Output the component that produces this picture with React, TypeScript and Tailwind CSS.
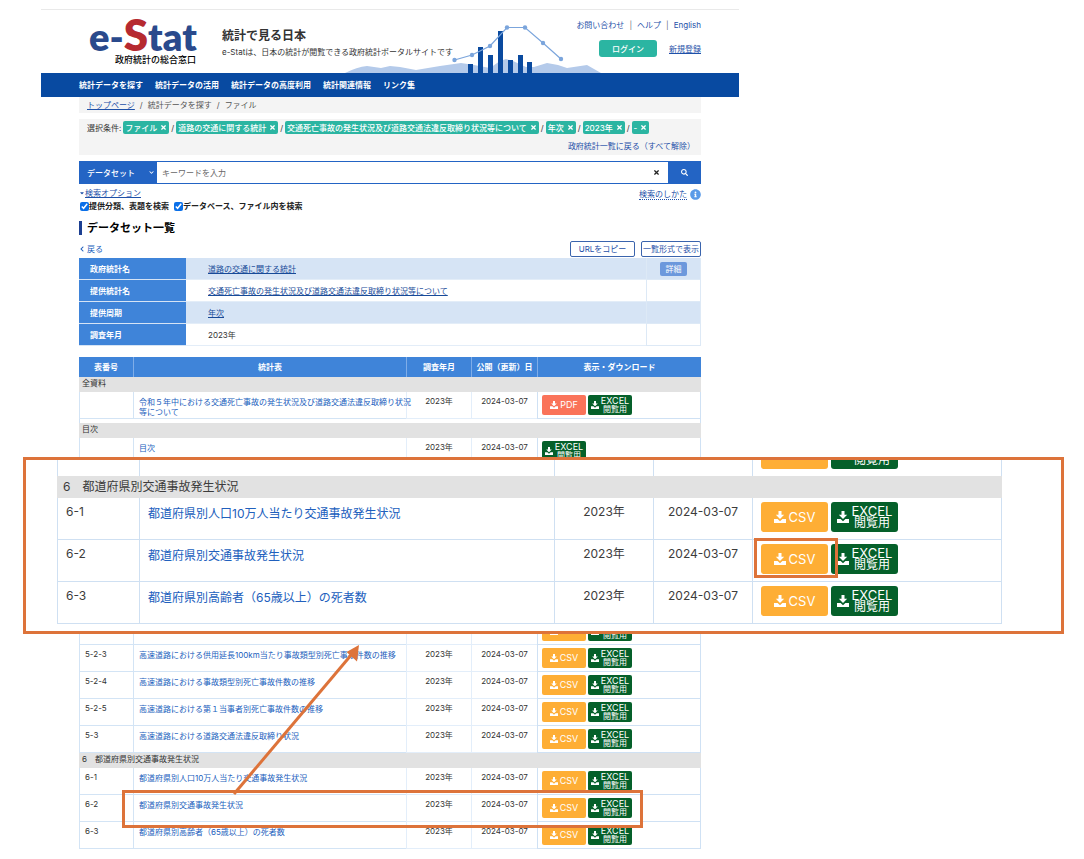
import { Fragment } from "react";
import { FaChevronDown, FaChevronLeft, FaInfoCircle, FaSearch, FaTimes, FaCaretDown } from "react-icons/fa";

type Row = { no: string; title: string[]; kind: "PDF" | "CSV" | "NONE" };

const conditions = [
  "ファイル",
  "道路の交通に関する統計",
  "交通死亡事故の発生状況及び道路交通法違反取締り状況等について",
  "年次",
  "2023年",
  "-",
];

const navItems = ["統計データを探す", "統計データの活用", "統計データの高度利用", "統計関連情報", "リンク集"];

const details = [
  { label: "政府統計名", value: "道路の交通に関する統計", link: true, button: true },
  { label: "提供統計名", value: "交通死亡事故の発生状況及び道路交通法違反取締り状況等について", link: true },
  { label: "提供周期", value: "年次", link: true },
  { label: "調査年月", value: "2023年", link: false },
];

const lowerRows: Row[] = [
  { no: "5-2-3", title: ["高速道路における供用延長100km当たり事故類型別死亡事故件数の推移"], kind: "CSV" },
  { no: "5-2-4", title: ["高速道路における事故類型別死亡事故件数の推移"], kind: "CSV" },
  { no: "5-2-5", title: ["高速道路における第１当事者別死亡事故件数の推移"], kind: "CSV" },
  { no: "5-3", title: ["高速道路における道路交通法違反取締り状況"], kind: "CSV" },
];

const prefectureRows: Row[] = [
  { no: "6-1", title: ["都道府県別人口10万人当たり交通事故発生状況"], kind: "CSV" },
  { no: "6-2", title: ["都道府県別交通事故発生状況"], kind: "CSV" },
  { no: "6-3", title: ["都道府県別高齢者（65歳以上）の死者数"], kind: "CSV" },
];

function HeaderChart() {
  const bars = [
    [468, 63],
    [478, 46],
    [488, 54],
    [498, 30],
    [508, 59],
    [518, 54],
    [527, 61],
  ];
  const dots = [
    [454.5, 59],
    [472, 54],
    [490, 45],
    [507, 26.5],
    [525, 26.5],
    [543, 42],
    [561, 58],
  ];
  return (
    <svg viewBox="345 22 258 50" className="absolute bottom-0 left-[304px] h-[50px] w-[258px]" aria-hidden="true">
      <path
        d="M345 72 Q357 66 367 65 L381 67 L390 65 L400 66 L416 69 L440 65 L461 62 L474 64 L490 67 L500 60 L506 58 L513 60 L526 66 L534 66 L547 62 L558 64 L567 67 L587 64 L601 72 Z"
        fill="#b4caea"
      />
      {bars.map(([x, y]) => (
        <rect key={x} x={x} y={y} width="5" height={72 - y} fill="#0a4a9f" />
      ))}
      <polyline points={dots.map((d) => d.join(",")).join(" ")} fill="none" stroke="#7ba5dc" strokeWidth="1.2" />
      {dots.map(([x, y]) => (
        <circle key={x} cx={x} cy={y} r="2.2" fill="#7ba5dc" />
      ))}
    </svg>
  );
}

function DownloadIcon({ className }: { className: string }) {
  return (
    <svg viewBox="0 0 12 12" className={className} fill="currentColor" aria-hidden="true">
      <path d="M4.5 0h3v3.800h2.700L6 8 1.800 3.800h2.700z" />
      <path d="M0 8h3.600L6 10.200 8.400 8H12v4H0z" />
    </svg>
  );
}

function DownloadButton({ kind, large = false }: { kind: "PDF" | "CSV" | "EXCEL"; large?: boolean }) {
  const color = kind === "PDF" ? "bg-[#fa7359]" : kind === "CSV" ? "bg-[#feae35]" : "bg-[#05602a]";
  return (
    <button
      type="button"
      className={`flex shrink-0 items-center justify-center text-white ${color} ${
        large ? "h-[30px] w-[67px] gap-[3px] rounded-[3px] text-[13px] leading-[12px]" : "h-[20px] w-[44px] gap-[2px] rounded-[2px] text-[9px] leading-[8px]"
      }`}
    >
      <DownloadIcon className={large ? "size-[12px] shrink-0" : "size-[8px] shrink-0"} />
      {kind === "EXCEL" ? (
        <span className="flex flex-col items-center">
          <span>EXCEL</span>
          <span className={large ? "text-[12px]" : "text-[8px]"}>閲覧用</span>
        </span>
      ) : (
        <span>{kind}</span>
      )}
    </button>
  );
}

function DataRow({ row }: { row: Row }) {
  return (
    <tr className="h-[27px]">
      <td className="border-b border-l border-[#d3e4f5] pt-[3px] pl-[5px]">{row.no}</td>
      <td className="border-b border-l border-[#d3e4f5] pt-[5px] pl-[5px] leading-[10px] whitespace-nowrap">
        <a href="#" className="text-[#2160bd]">
          {row.title.map((line) => (
            <span key={line} className="block">
              {line}
            </span>
          ))}
        </a>
      </td>
      <td className="border-b border-l border-[#e3eefa] pt-[3px] text-center">2023年</td>
      <td className="border-b border-l border-[#e3eefa] pt-[3px] text-center">2024-03-07</td>
      <td className="border-x border-b border-[#cfe1f4] pt-[3px] pl-[4px]">
        <div className="flex gap-[2px]">
          {row.kind !== "NONE" && <DownloadButton kind={row.kind} />}
          <DownloadButton kind="EXCEL" />
        </div>
      </td>
    </tr>
  );
}

function SectionRow({ children }: { children: string }) {
  return (
    <tr className="h-[15px]">
      <th colSpan={5} scope="colgroup" className="bg-[#e2e2e2] pl-[3px] text-left font-normal whitespace-pre">
        {children}
      </th>
    </tr>
  );
}

function Callout() {
  return (
    <aside className="absolute top-[457px] right-[20px] left-[23px] h-[177px] overflow-hidden border-[3px] border-[#dd733a] bg-white pr-[59px] pl-[31px]">
      <table className="w-full table-fixed border-separate border-spacing-0 text-[12px] leading-[18px] text-[#3c3c3c]">
        <colgroup>
          <col className="w-[82px]" />
          <col />
          <col className="w-[99px]" />
          <col className="w-[99px]" />
          <col className="w-[250px]" />
        </colgroup>
        <tbody>
          <tr className="h-[16px]">
            <td className="border-l border-[#cfe0f2]" />
            <td className="border-l border-[#cfe0f2]" />
            <td className="border-l border-[#cfe0f2]" />
            <td className="border-l border-[#cfe0f2]" />
            <td className="border-x border-[#cfe0f2] pl-[8px] align-top">
              <div className="flex h-[9px] items-end gap-[3px] overflow-hidden">
                <DownloadButton kind="CSV" large />
                <DownloadButton kind="EXCEL" large />
              </div>
            </td>
          </tr>
          <tr className="h-[22px]">
            <th colSpan={5} scope="colgroup" className="bg-[#e2e2e2] pl-[6px] text-left font-normal whitespace-pre">
              6　都道府県別交通事故発生状況
            </th>
          </tr>
          {prefectureRows.map((row) => (
            <tr key={row.no} className="h-[42px] align-top">
              <td className="border-b border-l border-[#cfe0f2] pt-[5px] pl-[8px]">{row.no}</td>
              <td className="border-b border-l border-[#cfe0f2] pt-[7px] pl-[8px]">
                <a href="#" className="text-[#2160bd]">
                  {row.title[0]}
                </a>
              </td>
              <td className="border-b border-l border-[#cfe0f2] pt-[5px] text-center">2023年</td>
              <td className="border-b border-l border-[#cfe0f2] pt-[5px] text-center">2024-03-07</td>
              <td className="border-x border-b border-[#cfe0f2] pt-[4px] pl-[8px]">
                <div className="relative flex gap-[3px]">
                  <DownloadButton kind="CSV" large />
                  <DownloadButton kind="EXCEL" large />
                  {row.no === "6-2" && (
                    <span className="absolute -top-[6px] -left-[7px] h-[40px] w-[84px] border-[3px] border-[#dd733a]" />
                  )}
                </div>
              </td>
            </tr>
          ))}
        </tbody>
      </table>
    </aside>
  );
}

export default function App() {
  return (
    <div
      lang="ja"
      className="relative min-h-screen overflow-hidden bg-white pt-[9px] pb-2 font-['Inter','Noto_Sans_CJK_JP',sans-serif] text-[8px] leading-[12px] text-[#333]"
    >
      <div className="ml-[41px] max-w-[698px]">
        <header className="relative flex h-[64px] border-t border-[#e9e9e9] pr-[38px] pl-[48px]">
          <HeaderChart />
          <a href="#" className="w-[107px] pt-[2px]">
            <span className="flex h-[43px] items-baseline justify-between font-['Lato',sans-serif] text-[38px] leading-[44px] font-extrabold text-[#2a4a8c]">
              <span>e</span>
              <span>-</span>
              <span className="text-[44px] text-[#b62a30]">S</span>
              <span>t</span>
              <span>a</span>
              <span>t</span>
            </span>
            <span className="block text-right text-[9px] leading-[10px] font-medium text-black">政府統計の総合窓口</span>
          </a>
          <div className="pt-[18px] pl-[26px]">
            <p className="text-[12px] leading-[16px] font-bold">統計で見る日本</p>
            <p className="leading-[16px] whitespace-nowrap">e-Statは、日本の統計が閲覧できる政府統計ポータルサイトです</p>
          </div>
          <div className="ml-auto flex flex-col items-end gap-[9px] pt-[9px] whitespace-nowrap text-[#1e50a8]">
            <div className="flex gap-[5px]">
              <a href="#">お問い合わせ</a>
              <span className="text-gray-500">|</span>
              <a href="#">ヘルプ</a>
              <span className="text-gray-500">|</span>
              <a href="#">English</a>
            </div>
            <div className="flex items-center gap-[12px]">
              <button type="button" className="h-[17px] w-[58px] rounded-[3px] bg-[#2bb5a2] font-medium text-white">
                ログイン
              </button>
              <a href="#" className="underline">
                新規登録
              </a>
            </div>
          </div>
        </header>

        <nav className="flex h-[24px] items-center gap-3 bg-[#084aa1] pl-[38px] font-bold text-white">
          {navItems.map((item) => (
            <a key={item} href="#">
              {item}
            </a>
          ))}
        </nav>

        <main className="mx-[38px]">
          <div className="flex h-[16px] items-center gap-[5px] bg-[#f4f4f4] pl-[8px] text-[#555]">
            <a href="#" className="text-[#1e50a8] underline">
              トップページ
            </a>
            <span>/</span>
            <span>統計データを探す</span>
            <span>/</span>
            <span>ファイル</span>
          </div>

          <section className="mt-[6px] h-[36px] bg-[#f4f4f4] pt-[2px] pr-[6px] pl-[8px]">
            <div className="flex items-center gap-[2px] whitespace-nowrap">
              <span>選択条件:</span>
              {conditions.map((name, i) => (
                <Fragment key={name}>
                  {i > 0 && <span>/</span>}
                  <button
                    type="button"
                    className="flex h-[13px] items-center gap-[3px] rounded-[2px] bg-[#2bb5a2] px-[2px] font-medium text-white"
                  >
                    {name}
                    <FaTimes className="size-[7px]" />
                  </button>
                </Fragment>
              ))}
            </div>
            <p className="mt-[6px] text-right">
              <a href="#" className="text-[#1e50a8]">
                政府統計一覧に戻る（すべて解除）
              </a>
            </p>
          </section>

          <form className="mt-[6px] flex h-[23px] border-y border-[#2364c4]">
            <div className="relative w-[78px] bg-[#2364c4]">
              <select
                aria-label="検索対象"
                className="h-full w-full appearance-none bg-transparent pl-[8px] font-medium text-white outline-none"
              >
                <option>データセット</option>
              </select>
              <FaChevronDown className="pointer-events-none absolute top-[8px] right-[3px] size-[5px] text-white" />
            </div>
            <input
              type="text"
              aria-label="キーワード"
              placeholder="キーワードを入力"
              className="min-w-0 flex-1 px-[5px] outline-none placeholder:text-[#666]"
            />
            <button type="button" aria-label="クリア" className="px-[8px]">
              <FaTimes className="size-[7px] text-[#222]" />
            </button>
            <button type="submit" aria-label="検索" className="flex w-[33px] items-center justify-center bg-[#2364c4] text-white">
              <FaSearch className="size-[7px]" />
            </button>
          </form>

          <div className="mt-[2px] flex items-center justify-between text-[#1e50a8]">
            <a href="#" className="flex items-center underline">
              <FaCaretDown className="size-[6px]" />
              検索オプション
            </a>
            <a href="#" className="flex items-center gap-[3px] pt-[3px]">
              <span className="border-b border-dotted border-[#1e50a8] leading-[10px]">検索のしかた</span>
              <FaInfoCircle className="size-[11px] text-[#5b9be8]" />
            </a>
          </div>
          <div className="flex h-[12px] items-center gap-[5px] font-bold text-[#222]">
            <label className="flex items-center">
              <input type="checkbox" defaultChecked className="ml-[1px] size-[9px] accent-[#0a6fe8]" />
              提供分類、表題を検索
            </label>
            <label className="flex items-center">
              <input type="checkbox" defaultChecked className="size-[9px] accent-[#0a6fe8]" />
              データベース、ファイル内を検索
            </label>
          </div>

          <h1 className="mt-[9px] border-l-3 border-[#1c3f91] pl-[5px] text-[11px] leading-[14px] font-bold text-black">
            データセット一覧
          </h1>

          <div className="mt-[5px] flex h-[18px] items-center">
            <a href="#" className="flex items-center gap-[2px] text-[#2160bd]">
              <FaChevronLeft className="size-[6px]" />
              戻る
            </a>
            <button type="button" className="ml-auto h-[16px] w-[65px] rounded-[2px] border border-[#3a64ad] text-[#1e50a8]">
              URLをコピー
            </button>
            <button
              type="button"
              className="ml-[6px] h-[16px] w-[60px] rounded-[2px] border border-[#3a64ad] whitespace-nowrap text-[#1e50a8]"
            >
              一覧形式で表示
            </button>
          </div>

          <table className="w-full table-fixed border-separate border-spacing-0">
            <colgroup>
              <col className="w-[107px]" />
              <col />
              <col className="w-[55px]" />
            </colgroup>
            <tbody>
              {details.map((d) => (
                <tr key={d.label} className="h-[22px] odd:bg-[#d6e4f5]">
                  <th scope="row" className="border-b border-[#d6e4f5] bg-[#3f84d9] pl-[11px] text-left font-bold text-white">
                    {d.label}
                  </th>
                  <td className="border-b border-[#e3edf8] pl-[22px]">
                    {d.link ? (
                      <a href="#" className="text-[#174a98] underline">
                        {d.value}
                      </a>
                    ) : (
                      d.value
                    )}
                  </td>
                  <td className="border-x border-b border-[#dde9f6] text-center">
                    {d.button && (
                      <button type="button" className="mx-auto block h-[14px] w-[27px] rounded-[2px] bg-[#6c98dc] text-white">
                        詳細
                      </button>
                    )}
                  </td>
                </tr>
              ))}
            </tbody>
          </table>

          <table className="mt-[11px] w-full table-fixed border-separate border-spacing-0">
            <colgroup>
              <col className="w-[54px]" />
              <col />
              <col className="w-[65px]" />
              <col className="w-[66px]" />
              <col className="w-[164px]" />
            </colgroup>
            <thead>
              <tr className="h-[20px] bg-[#3f84d9] whitespace-nowrap text-white">
                <th scope="col">表番号</th>
                <th scope="col" className="border-l border-[#7fade8]">統計表</th>
                <th scope="col" className="border-l border-[#7fade8]">調査年月</th>
                <th scope="col" className="border-l border-[#7fade8]">公開（更新）日</th>
                <th scope="col" className="border-l border-[#7fade8]">表示・ダウンロード</th>
              </tr>
            </thead>
            <tbody className="align-top">
              <SectionRow>全資料</SectionRow>
              <DataRow
                row={{
                  no: "",
                  title: ["令和５年中における交通死亡事故の発生状況及び道路交通法違反取締り状況", "等について"],
                  kind: "PDF",
                }}
              />
              <tr className="h-[4px]">
                <td colSpan={5} className="border-x border-[#cfe1f4]" />
              </tr>
              <SectionRow>目次</SectionRow>
              <DataRow row={{ no: "", title: ["目次"], kind: "NONE" }} />
              <tr className="h-[153px]" aria-hidden="true">
                <td colSpan={5} />
              </tr>
              <DataRow row={{ no: "", title: [], kind: "CSV" }} />
              {lowerRows.map((row) => (
                <DataRow key={row.no} row={row} />
              ))}
              <SectionRow>6　都道府県別交通事故発生状況</SectionRow>
              {prefectureRows.map((row) => (
                <DataRow key={row.no} row={row} />
              ))}
            </tbody>
          </table>
        </main>
      </div>

      <div className="absolute top-[790px] left-[122px] h-[38px] w-[521px] border-[3px] border-[#dd733a]" />
      <Callout />
      <svg viewBox="0 0 130 152" className="absolute top-[643px] left-[232px] h-[152px] w-[130px]" aria-hidden="true">
        <path d="M2 151 L120 11" stroke="#dd733a" strokeWidth="3" fill="none" />
        <path d="M127 2 L114.5 9 L125 18.500 Z" fill="#dd733a" />
      </svg>
    </div>
  );
}
